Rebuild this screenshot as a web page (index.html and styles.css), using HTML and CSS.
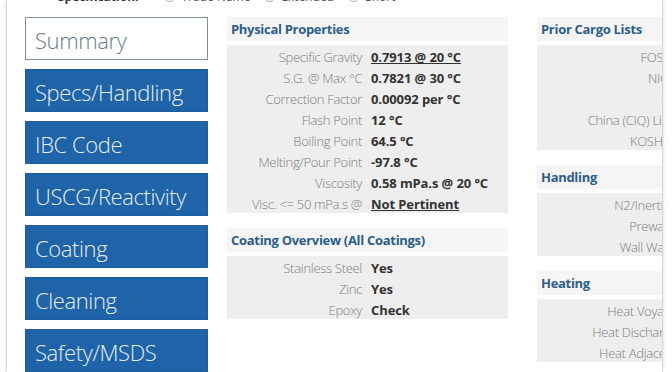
FILE: index.html
```html
<!DOCTYPE html>
<html lang="en">
<head>
  <meta charset="UTF-8" />
  <meta name="viewport" content="width=device-width, initial-scale=1.0" />
  <title>Cargo Summary</title>
  <link rel="stylesheet" href="styles.css">
</head>
<body>

  <div class="page">
    <div class="spec-bar">
      <strong>Specification:</strong>
      <label><span class="radio"></span>Trade Name</label>
      <label><span class="radio"></span>Extended</label>
      <label><span class="radio"></span>Short</label>
    </div>

    <div class="layout">
      <nav class="side-nav">
        <a class="nav-btn active">Summary</a>
        <a class="nav-btn">Specs/Handling</a>
        <a class="nav-btn">IBC Code</a>
        <a class="nav-btn">USCG/Reactivity</a>
        <a class="nav-btn">Coating</a>
        <a class="nav-btn">Cleaning</a>
        <a class="nav-btn">Safety/MSDS</a>
      </nav>

      <div class="column">
        <div class="panel">
          <h3>Physical Properties</h3>
          <div class="panel-body">
            <div class="row"><span class="label">Specific Gravity</span><a class="value link">0.7913 @ 20 °C</a></div>
            <div class="row"><span class="label">S.G. @ Max °C</span><span class="value">0.7821 @ 30 °C</span></div>
            <div class="row"><span class="label">Correction Factor</span><span class="value">0.00092 per °C</span></div>
            <div class="row"><span class="label">Flash Point</span><span class="value">12 °C</span></div>
            <div class="row"><span class="label">Boiling Point</span><span class="value">64.5 °C</span></div>
            <div class="row"><span class="label">Melting/Pour Point</span><span class="value">-97.8 °C</span></div>
            <div class="row"><span class="label">Viscosity</span><span class="value">0.58 mPa.s @ 20 °C</span></div>
            <div class="row"><span class="label">Visc. &lt;= 50 mPa.s @</span><a class="value link">Not Pertinent</a></div>
          </div>
        </div>

        <div class="panel">
          <h3>Coating Overview (All Coatings)</h3>
          <div class="panel-body">
            <div class="row"><span class="label">Stainless Steel</span><span class="value">Yes</span></div>
            <div class="row"><span class="label">Zinc</span><span class="value">Yes</span></div>
            <div class="row"><span class="label">Epoxy</span><span class="value">Check</span></div>
          </div>
        </div>
      </div>

      <div class="column wide-labels">
        <div class="panel">
          <h3>Prior Cargo Lists</h3>
          <div class="panel-body">
            <div class="row"><span class="label">FOSFA</span><span class="value">Yes</span></div>
            <div class="row"><span class="label">NIOP</span><span class="value">Yes</span></div>
            <div class="row"><span class="label">EU</span><span class="value">Yes</span></div>
            <div class="row"><span class="label">China (CIQ) Lists</span><span class="value">Yes</span></div>
            <div class="row"><span class="label">KOSHER</span><span class="value">Check</span></div>
          </div>
        </div>

        <div class="panel">
          <h3>Handling</h3>
          <div class="panel-body">
            <div class="row"><span class="label">N2/Inerting</span><span class="value">No</span></div>
            <div class="row"><span class="label">Prewash</span><span class="value">No</span></div>
            <div class="row"><span class="label">Wall Wash</span><span class="value">Yes</span></div>
          </div>
        </div>

        <div class="panel">
          <h3>Heating</h3>
          <div class="panel-body">
            <div class="row"><span class="label">Heat Voyage</span><span class="value">No</span></div>
            <div class="row"><span class="label">Heat Discharge</span><span class="value">No</span></div>
            <div class="row"><span class="label">Heat Adjacent</span><span class="value">No</span></div>
          </div>
        </div>
      </div>
    </div>
  </div>

</body>
</html>
```

FILE: styles.css
```css
body {
  font-family: "Open Sans", "Liberation Sans", sans-serif;
  background-color: #fff;
  color: #333;
  margin: 0;
  padding: 0;
  overflow: hidden;
}
.page {
  margin-left: 7px;
  width: 655px;
  height: 372px;
  overflow: hidden;
  background: #fff;
  box-shadow: 0 0 3px rgba(0, 0, 0, 0.4);
  padding-left: 18px;
  box-sizing: border-box;
}
.spec-bar {
  display: flex;
  align-items: center;
  gap: 14px;
  height: 16px;
  margin-top: -12px;
  margin-left: 33px;
  margin-bottom: 13px;
  font-size: 12px;
  color: #333;
}
.spec-bar strong {
  margin-right: 12px;
}
.spec-bar label {
  display: flex;
  align-items: center;
  gap: 6px;
  color: #555;
}
.radio {
  width: 9px;
  height: 9px;
  border: 1px solid #aaa;
  border-radius: 50%;
}
.layout {
  display: flex;
  align-items: flex-start;
}
.side-nav {
  width: 183px;
  flex: none;
  display: flex;
  flex-direction: column;
  gap: 9px;
  margin-right: 19px;
}
.nav-btn {
  display: block;
  height: 43px;
  line-height: 41px;
  box-sizing: border-box;
  padding: 2px 0 0 9px;
  background-color: #1f63a8;
  border: 1px solid #1c5d9f;
  color: #e8eff7;
  font-weight: 300;
  font-size: 22px;
  letter-spacing: -0.4px;
  white-space: nowrap;
}
.nav-btn.active {
  background-color: #fff;
  border: 1px solid #7f909c;
  color: #6a7b88;
}
.column {
  width: 281px;
  flex: none;
  margin-right: 29px;
}
.panel {
  margin-bottom: 15px;
}
.panel h3 {
  margin: 0 0 4px;
  height: 24px;
  line-height: 25px;
  padding-left: 4px;
  background: #f5f5f5;
  color: #2d5e8c;
  font-size: 13px;
  font-weight: 700;
  letter-spacing: -0.3px;
}
.panel-body {
  background: #eeeeee;
  padding-top: 2px;
}
.row {
  display: grid;
  grid-template-columns: 135px 1fr;
  column-gap: 9px;
  height: 21px;
  line-height: 21px;
  white-space: nowrap;
}
.panel-body .row:last-child {
  height: 19px;
}
.wide-labels .row {
  grid-template-columns: 140px 1fr;
}
.label {
  text-align: right;
  color: #7c7c7c;
  font-size: 13px;
  font-weight: 300;
  letter-spacing: -0.3px;
}
.value {
  color: #333;
  font-size: 13px;
  font-weight: 700;
  letter-spacing: -0.1px;
}
.value.link {
  text-decoration: underline;
}
```
